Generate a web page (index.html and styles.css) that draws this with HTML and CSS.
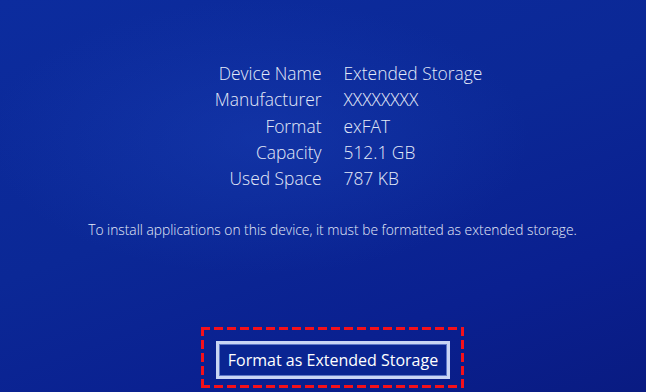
FILE: index.html
```html
<!DOCTYPE html>
<html lang="en">
<head>
  <meta charset="UTF-8">
  <meta name="viewport" content="width=device-width, initial-scale=1.0">
  <title>Storage Device Information</title>
  <link rel="stylesheet" href="styles.css">
</head>
<body>
  <main class="screen">
    <dl class="device-info">
      <dt>Device Name</dt>
      <dd>Extended Storage</dd>
      <dt>Manufacturer</dt>
      <dd>XXXXXXXX</dd>
      <dt>Format</dt>
      <dd>exFAT</dd>
      <dt>Capacity</dt>
      <dd>512.1 GB</dd>
      <dt>Used Space</dt>
      <dd>787 KB</dd>
    </dl>

    <p class="notice">To install applications on this device, it must be formatted as extended storage.</p>

    <div class="highlight">
      <button class="format-button">Format as Extended Storage</button>
    </div>
  </main>
</body>
</html>
```

FILE: styles.css
```css
/* General styling */
html,
body {
  margin: 0;
  padding: 0;
  height: 100%;
}

body {
  font-family: 'Open Sans', 'Liberation Sans', sans-serif;
  color: #e4eaf8;
  background:
    radial-gradient(ellipse 60% 50% at 40% 35%, rgba(30, 70, 190, 0.35), transparent 70%),
    linear-gradient(160deg, #0c2c9e 0%, #0b2896 45%, #0a2090 75%, #091b82 100%);
  overflow: hidden;
}

.screen {
  display: flex;
  flex-direction: column;
  align-items: center;
  height: 100%;
  padding-left: 19px;
  box-sizing: border-box;
}

/* Device details */
.device-info {
  display: grid;
  grid-template-columns: 1fr 1fr;
  column-gap: 22px;
  width: 100%;
  margin: 60px 0 0;
  font-size: 17.4px;
  font-weight: 300;
  line-height: 26.3px;
}

.device-info dt {
  text-align: right;
}

.device-info dd {
  margin: 0;
  text-align: left;
}

.notice {
  margin: 31px 0 0;
  font-size: 13.8px;
  font-weight: 300;
  line-height: 16px;
  white-space: nowrap;
}

/* Highlighted action */
.highlight {
  margin-top: 89px;
  padding: 14px 14px 9px 15px;
  width: 263px;
  height: 61px;
  box-sizing: border-box;
  background:
    repeating-linear-gradient(90deg, #f5101a 0 9px, transparent 9px 13px) top left / 100% 3px no-repeat,
    repeating-linear-gradient(90deg, #f5101a 0 9px, transparent 9px 13px) bottom left / 100% 3px no-repeat,
    repeating-linear-gradient(180deg, #f5101a 0 9px, transparent 9px 13px) top left / 3px 100% no-repeat,
    repeating-linear-gradient(180deg, #f5101a 0 9px, transparent 9px 13px) top right / 3px 100% no-repeat;
}

.format-button {
  display: block;
  width: 234px;
  height: 38px;
  padding: 0;
  font-family: 'Open Sans', 'Liberation Sans', sans-serif;
  font-size: 16px;
  font-weight: 500;
  color: #ffffff;
  background: #0a2592;
  border: 3px solid #c9d5f4;
  box-shadow: inset 0 0 0 1px #5f78c8;
  cursor: pointer;
}
```
